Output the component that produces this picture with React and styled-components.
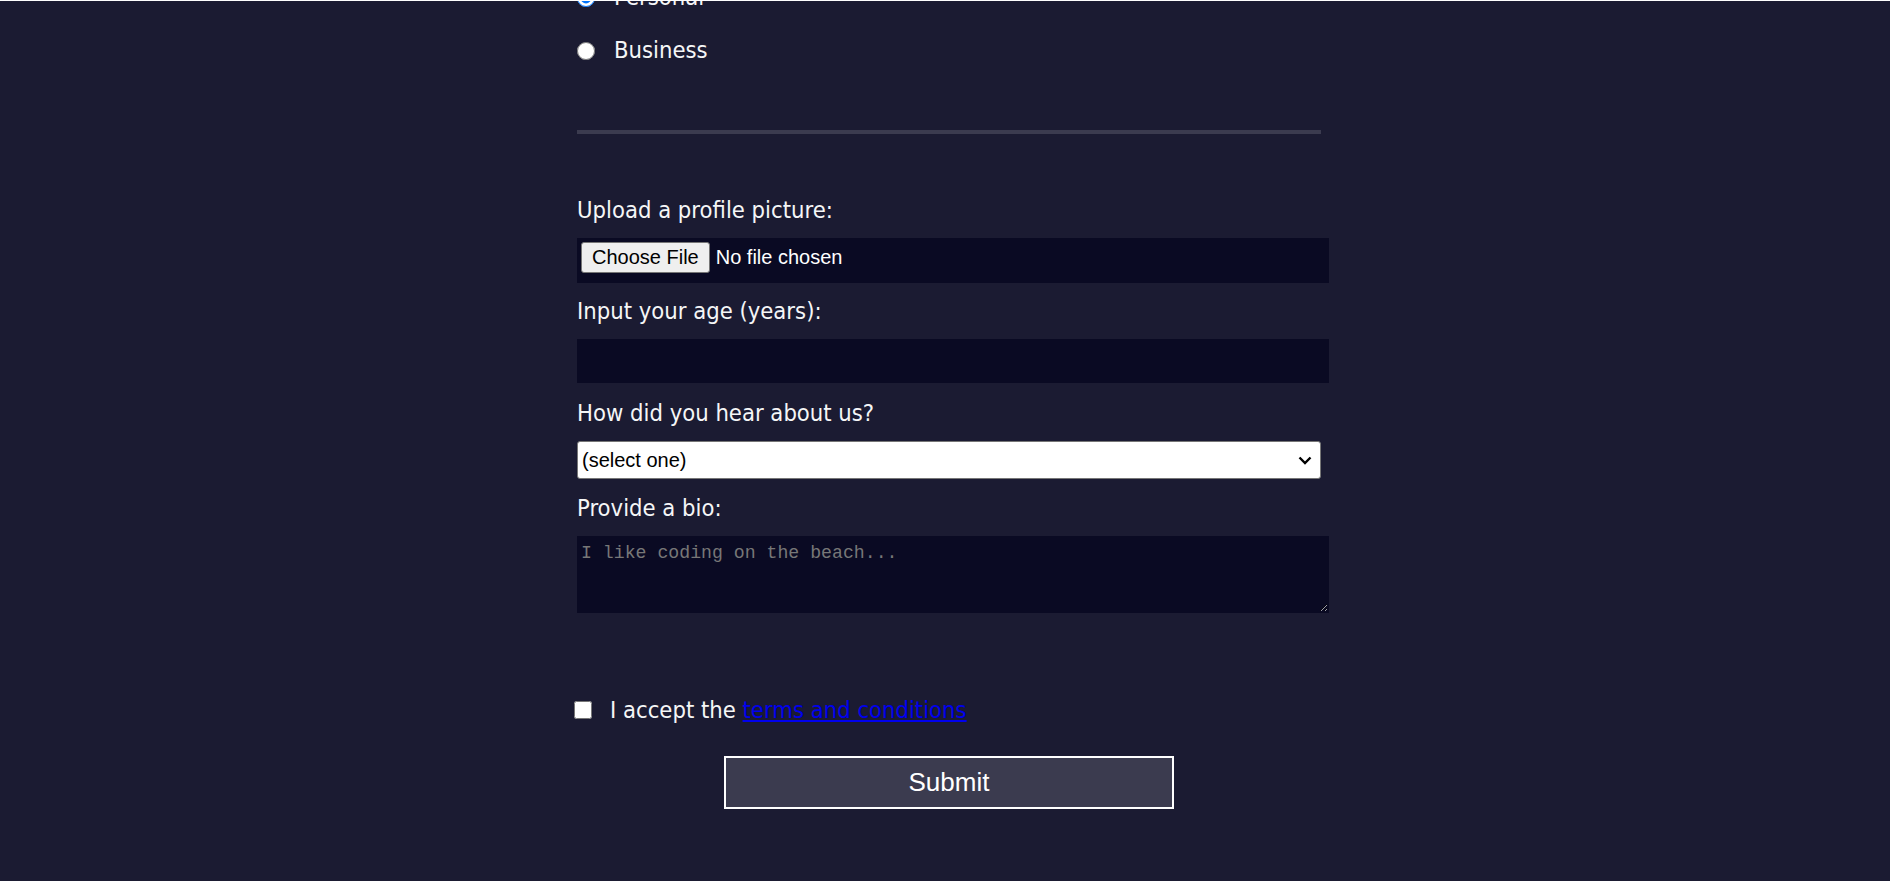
import React from 'react';
import styled, { createGlobalStyle } from 'styled-components';

const GlobalStyle = createGlobalStyle`
  html, body {
    margin: 0;
    padding: 0;
    background-color: #1b1b32;
  }
  body {
    color: #f5f6f7;
    font-family: "DejaVu Sans Condensed", "DejaVu Sans", sans-serif;
    font-size: 23.6px;
    overflow: hidden;
  }
`;

const chevron =
  "url(\"data:image/svg+xml;utf8,<svg xmlns='http://www.w3.org/2000/svg' width='14' height='9' viewBox='0 0 14 9'><path d='M1.5 1.5 L7 7 L12.5 1.5' fill='none' stroke='black' stroke-width='2.4'/></svg>\")";

const Page = styled.div`
  min-height: 881px;
  padding-left: 8px;
  box-sizing: border-box;

  &::before {
    content: '';
    position: fixed;
    top: 0;
    left: 0;
    right: 0;
    height: 1px;
    background: #ffffff;
    z-index: 2;
  }
`;

// negative top margin stands in for the page being scrolled down
const Form = styled.form`
  width: 744px;
  margin: -23px auto 0;
  padding-bottom: 48px;
`;

const Fieldset = styled.fieldset`
  margin: 0;
  min-width: 0;
  border: none;
  padding: ${(p) => p.$pad};
  display: flex;
  flex-direction: column;
  border-bottom: ${(p) => (p.$divider ? '4px solid #3b3b4f' : 'none')};
`;

const InlineLabel = styled.label`
  display: flex;
  align-items: center;
  height: ${(p) => p.$h || 41}px;
  margin-bottom: ${(p) => p.$mb || 0}px;
  margin-top: ${(p) => p.$mt || 0}px;
  line-height: 29px;
`;

const Radio = styled.input`
  width: 18px;
  height: 18px;
  margin: 0 19px 0 0;
`;

const Checkbox = styled.input`
  width: 18px;
  height: 18px;
  margin: 0 18px 0 -3px;
`;

const Field = styled.label`
  display: flex;
  flex-direction: column;
  margin-bottom: ${(p) => p.$space || 0}px;
`;

const FieldText = styled.span`
  line-height: 29px;
  height: 29px;
  padding-top: 1px;
  margin-bottom: -1px;
`;

const TextInput = styled.input`
  box-sizing: border-box;
  width: calc(100% + 8px);
  height: ${(p) => p.$h || 44}px;
  margin: 14px 0 0;
  padding: 1px 3px;
  background-color: #0a0a23;
  border: 1px solid #0a0a23;
  color: #ffffff;
  font-family: "Liberation Sans", Arial, sans-serif;
  font-size: 20px;
  outline: none;
`;

const FileInput = styled(TextInput)`
  padding: 3px 3px 0;

  &::file-selector-button {
    height: 31px;
    margin: 0 6px 0 0;
    padding: 0 10px;
    font-family: "Liberation Sans", Arial, sans-serif;
    font-size: 20px;
    color: #000000;
    background: #efefef;
    border: 1px solid #767676;
    border-radius: 3px;
  }
`;

const Select = styled.select`
  appearance: none;
  box-sizing: border-box;
  width: 100%;
  height: 38px;
  margin: 14px 0 0;
  padding: 0 30px 0 4px;
  font-family: "Liberation Sans", Arial, sans-serif;
  font-size: 20px;
  color: #000000;
  background: #ffffff ${chevron} no-repeat right 8px center / 14px 9px;
  border: 1px solid #767676;
  border-radius: 3px;
`;

const TextArea = styled.textarea`
  box-sizing: border-box;
  display: block;
  width: calc(100% + 8px);
  height: 77px;
  margin: 14px 0 0;
  padding: 6px 3px;
  background-color: #0a0a23;
  border: 1px solid #0a0a23;
  color: #ffffff;
  font-family: "Liberation Mono", monospace;
  font-size: 18.2px;
  outline: none;

  &::placeholder {
    color: #777777;
  }
`;

const Link = styled.a`
  color: #0000ee;
  text-decoration: underline;
`;

const SubmitButton = styled.input`
  display: block;
  box-sizing: border-box;
  width: 450px;
  height: 53px;
  margin: 26px auto 0;
  background-color: #3b3b4f;
  border: 2px solid #ffffff;
  color: #ffffff;
  font-family: "Liberation Sans", Arial, sans-serif;
  font-size: 26px;
`;

export default function App() {
  return (
    <Page>
      <GlobalStyle />
      <Form onSubmit={(e) => e.preventDefault()}>
        <Fieldset $pad="0 0 59px" $divider>
          <InlineLabel $mb={12}>
            <Radio type="radio" name="account-type" defaultChecked />
            <span>Personal</span>
          </InlineLabel>
          <InlineLabel>
            <Radio type="radio" name="account-type" />
            <span>Business</span>
          </InlineLabel>
        </Fieldset>

        <Fieldset $pad="61px 0 65px">
          <Field $space={13}>
            <FieldText>Upload a profile picture:</FieldText>
            <FileInput type="file" $h={45} />
          </Field>
          <Field $space={15}>
            <FieldText>Input your age (years):</FieldText>
            <TextInput type="number" min="13" max="120" />
          </Field>
          <Field $space={14}>
            <FieldText>How did you hear about us?</FieldText>
            <Select defaultValue="">
              <option value="">(select one)</option>
              <option value="1">freeCodeCamp News</option>
              <option value="2">freeCodeCamp YouTube Channel</option>
              <option value="3">freeCodeCamp Forum</option>
              <option value="4">Other</option>
            </Select>
          </Field>
          <Field>
            <FieldText>Provide a bio:</FieldText>
            <TextArea rows="3" cols="30" placeholder="I like coding on the beach..." />
          </Field>
        </Fieldset>

        <InlineLabel $h={40} $mt={12}>
          <Checkbox type="checkbox" required />
          <span>
            I accept the <Link href="#">terms and conditions</Link>
          </span>
        </InlineLabel>

        <SubmitButton type="submit" value="Submit" />
      </Form>
    </Page>
  );
}
